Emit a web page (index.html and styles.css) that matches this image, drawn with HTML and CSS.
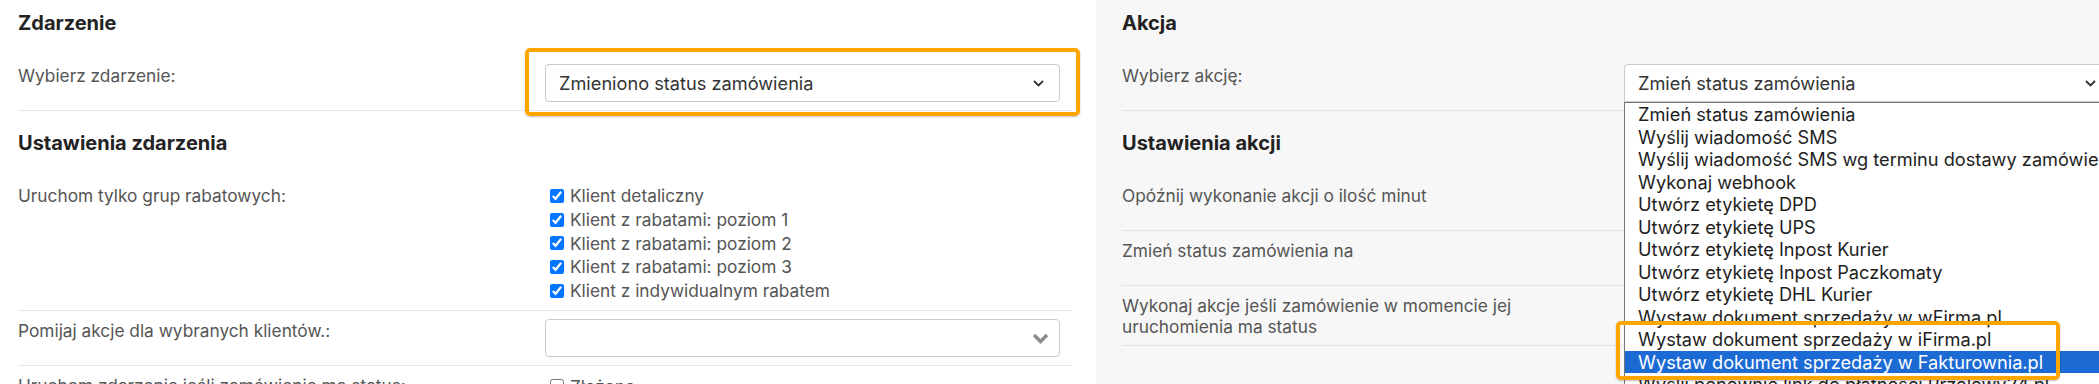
FILE: index.html
```html
<!DOCTYPE html>
<html lang="pl">
<head>
<meta charset="utf-8">
<title>Automatyzacja</title>
<link rel="stylesheet" href="styles.css">
</head>
<body>
<div class="page">
  <section class="panel panel-event">
    <h3 class="section-title">Zdarzenie</h3>
    <div class="row">
      <div class="row-label">Wybierz zdarzenie:</div>
      <div class="field">
        <div class="select">
          <span>Zmieniono status zamówienia</span>
          <svg class="chev" width="11" height="7" viewBox="0 0 11 7"><path d="M1 1l4.5 4.5L10 1" fill="none" stroke="#333" stroke-width="1.8"/></svg>
        </div>
        <div class="mark mark-event"></div>
      </div>
    </div>

    <h3 class="section-title sub">Ustawienia zdarzenia</h3>
    <div class="row">
      <div class="row-label">Uruchom tylko grup rabatowych:</div>
      <div class="field checks">
        <label class="check"><input type="checkbox" checked>Klient detaliczny</label>
        <label class="check"><input type="checkbox" checked>Klient z rabatami: poziom 1</label>
        <label class="check"><input type="checkbox" checked>Klient z rabatami: poziom 2</label>
        <label class="check"><input type="checkbox" checked>Klient z rabatami: poziom 3</label>
        <label class="check"><input type="checkbox" checked>Klient z indywidualnym rabatem</label>
      </div>
    </div>
    <div class="row">
      <div class="row-label">Pomijaj akcje dla wybranych klientów.:</div>
      <div class="field">
        <div class="select select-multi">
          <span></span>
          <svg class="chev" width="17" height="11" viewBox="0 0 17 11"><path d="M2 2l6.5 6.5L15 2" fill="none" stroke="#8a8a8a" stroke-width="3.4"/></svg>
        </div>
      </div>
    </div>
    <div class="row">
      <div class="row-label">Uruchom zdarzenie jeśli zamówienie ma status:</div>
      <div class="field checks">
        <label class="check"><input type="checkbox">Złożone</label>
        <label class="check"><input type="checkbox">W realizacji</label>
      </div>
    </div>
  </section>

  <section class="panel panel-action">
    <h3 class="section-title">Akcja</h3>
    <div class="row">
      <div class="row-label">Wybierz akcję:</div>
      <div class="field">
        <div class="select select-open">
          <span>Zmień status zamówienia</span>
          <svg class="chev" width="11" height="7" viewBox="0 0 11 7"><path d="M1 1l4.5 4.5L10 1" fill="none" stroke="#333" stroke-width="1.8"/></svg>
        </div>
        <div class="dropdown">
          <div class="option">Zmień status zamówienia</div>
          <div class="option">Wyślij wiadomość SMS</div>
          <div class="option">Wyślij wiadomość SMS wg terminu dostawy zamówienia</div>
          <div class="option">Wykonaj webhook</div>
          <div class="option">Utwórz etykietę DPD</div>
          <div class="option">Utwórz etykietę UPS</div>
          <div class="option">Utwórz etykietę Inpost Kurier</div>
          <div class="option">Utwórz etykietę Inpost Paczkomaty</div>
          <div class="option">Utwórz etykietę DHL Kurier</div>
          <div class="option">Wystaw dokument sprzedaży w wFirma.pl</div>
          <div class="option-group">
            <div class="option">Wystaw dokument sprzedaży w iFirma.pl</div>
            <div class="option selected">Wystaw dokument sprzedaży w Fakturownia.pl</div>
            <div class="mark mark-options"></div>
          </div>
          <div class="option">Wyślij ponownie link do płatności Przelewy24.pl</div>
        </div>
      </div>
    </div>

    <h3 class="section-title sub">Ustawienia akcji</h3>
    <div class="row">
      <div class="row-label">Opóźnij wykonanie akcji o ilość minut</div>
      <div class="field"><div class="select"><span>0</span></div></div>
    </div>
    <div class="row">
      <div class="row-label">Zmień status zamówienia na</div>
      <div class="field"><div class="select"><span>Nowe</span></div></div>
    </div>
    <div class="row">
      <div class="row-label">Wykonaj akcje jeśli zamówienie w momencie jej uruchomienia ma status</div>
      <div class="field"><div class="select"><span></span></div></div>
    </div>
  </section>
</div>
</body>
</html>
```

FILE: styles.css
```css
* { box-sizing: border-box; }

html, body {
  margin: 0;
  padding: 0;
}

body {
  width: 2099px;
  height: 384px;
  overflow: hidden;
  background: #fff;
  font-family: Inter, "Noto Sans", sans-serif;
  color: #555;
}

.page {
  display: flex;
  width: 2220px;
  height: 384px;
}

.panel {
  flex: none;
}

.panel-event {
  width: 1096px;
  padding: 11px 24px 0 18px;
  background: #fff;
}

.panel-action {
  width: 1120px;
  padding: 11px 0 0 26px;
  background: #f7f7f7;
}

.section-title {
  margin: 0 0 21px;
  font-size: 20px;
  line-height: 24px;
  font-weight: 700;
  color: #222;
}

.section-title.sub {
  margin-top: 20px;
}

.row {
  display: grid;
  grid-template-columns: 527px 515px;
  padding: 8px 12px 8px 0;
  border-bottom: 1px solid #e6e6e6;
}

.panel-action .row {
  grid-template-columns: 502px 488px;
  border-bottom-color: #e3e3e3;
}

.row-label {
  font-size: 17.3px;
  line-height: 21px;
  padding-top: 1px;
  padding-right: 20px;
}

.panel-action .row-label {
  padding-right: 40px;
}

.field {
  position: relative;
}

.select {
  height: 38px;
  border: 1px solid #cacaca;
  border-radius: 4px;
  background: #fff;
  display: flex;
  align-items: center;
  justify-content: space-between;
  padding: 0 15px 0 13px;
  font-size: 18.2px;
  color: #333;
}

.select-multi {
  padding-right: 10px;
}

.select-open {
  border-bottom-left-radius: 0;
  border-bottom-right-radius: 0;
}

.chev {
  flex: none;
  display: block;
}

.checks {
  padding-left: 5px;
}

.check {
  display: flex;
  align-items: center;
  height: 23.7px;
  font-size: 17.3px;
  color: #555;
}

.check input {
  width: 14px;
  height: 14px;
  margin: 0 6px 0 0;
}

.mark {
  position: absolute;
  border: 4px solid #ffa500;
  border-radius: 5px;
  box-shadow: 0 1px 2px rgba(0, 0, 0, 0.25);
  pointer-events: none;
}

.mark-event {
  top: -16px;
  bottom: -14px;
  left: -20px;
  right: -20px;
}

.dropdown {
  position: absolute;
  top: 100%;
  left: 0;
  width: 580px;
  background: #fff;
  border: 1px solid #767676;
  font-size: 18.2px;
  color: #1e1e1e;
  z-index: 2;
}

.option {
  height: 22.5px;
  line-height: 22.5px;
  padding-left: 13px;
  white-space: nowrap;
}

.option.selected {
  background: #1c6bd5;
  color: #fff;
}

.option-group {
  position: relative;
}

.mark-options {
  top: -7px;
  bottom: -7px;
  left: -9px;
  width: 444px;
  z-index: 3;
}
```
